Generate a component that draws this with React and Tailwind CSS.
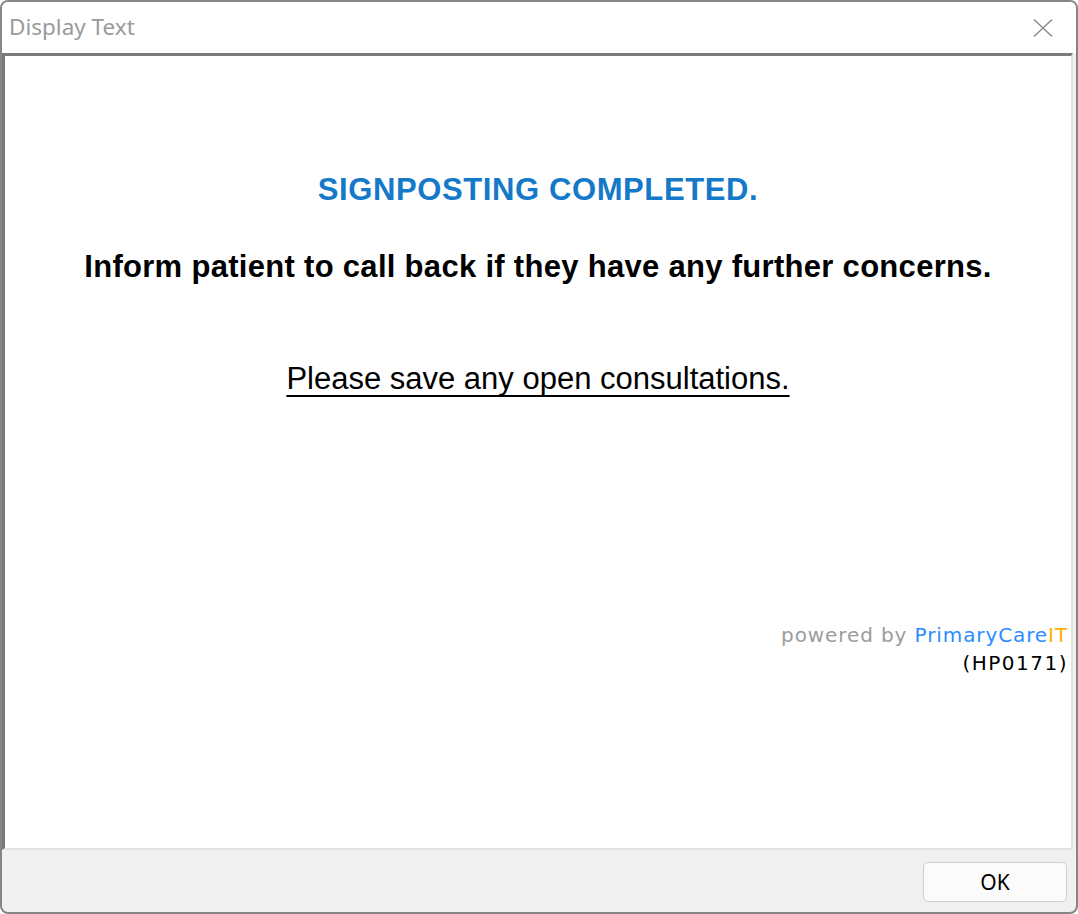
import React from "react";

// --- Close glyph in the title bar ---
const CloseIcon = () => (
  <svg width="20" height="20" viewBox="0 0 20 20" fill="none">
    <path d="M1 1.5 L19 18.5 M19 1.5 L1 18.5" stroke="#8a8a8a" strokeWidth="1.4" />
  </svg>
);

// --- Main dialog ---
export default function App() {
  return (
    <div className="w-[1078px] h-[914px] bg-white">
      <div className="w-full h-full flex flex-col border-2 border-[#868686] rounded-[8px] overflow-hidden bg-[#f0f0f0]">
        {/* --- Title bar --- */}
        <div className="h-[51px] shrink-0 bg-white flex items-center justify-between pl-[7px] pr-[23px]">
          <span className="text-[22.5px] text-[#9a9a9a] font-['Noto_Sans',sans-serif] leading-none -mt-[1px]">
            Display Text
          </span>
          <CloseIcon />
        </div>

        {/* --- Content area --- */}
        <div className="flex-1 bg-white flex flex-col border-t-[3px] border-l-[3px] border-t-[#7a7a7a] border-l-[#7a7a7a] border-r-2 border-b-2 border-r-[#e3e3e3] border-b-[#e3e3e3] mr-[3px] font-['Liberation_Sans',Arial,sans-serif]">
          <p className="mt-[115px] text-center text-[31px] leading-[38px] font-bold tracking-[0.6px] text-[#1479c9]">
            SIGNPOSTING COMPLETED.
          </p>
          <p className="mt-[39px] text-center text-[31px] leading-[38px] font-bold tracking-[0.3px] text-black">
            Inform patient to call back if they have any further concerns.
          </p>
          <p className="mt-[74px] text-center text-[31px] leading-[38px] text-black">
            <span className="underline decoration-2 underline-offset-[6px]">
              Please save any open consultations.
            </span>
          </p>

          <div className="mt-[223px] pr-[3px] text-right font-['DejaVu_Sans',Verdana,sans-serif] text-[20px] leading-[28px]">
            <div className="tracking-[0.9px]">
              <span className="text-[#9c9c9c]">powered by </span>
              <span className="text-[#2b8cff]">PrimaryCare</span>
              <span className="text-[#ffb000]">IT</span>
            </div>
            <div className="text-black tracking-[1.5px]">(HP0171)</div>
          </div>
        </div>

        {/* --- Button bar --- */}
        <div className="h-[62px] shrink-0 flex justify-end items-start pt-[12px] pr-[9px]">
          <button className="w-[144px] h-[40px] rounded-[5px] border border-[#cfcfcf] bg-[#fbfbfb] text-[21px] text-black font-['Noto_Sans',sans-serif] leading-none">
            OK
          </button>
        </div>
      </div>
    </div>
  );
}
